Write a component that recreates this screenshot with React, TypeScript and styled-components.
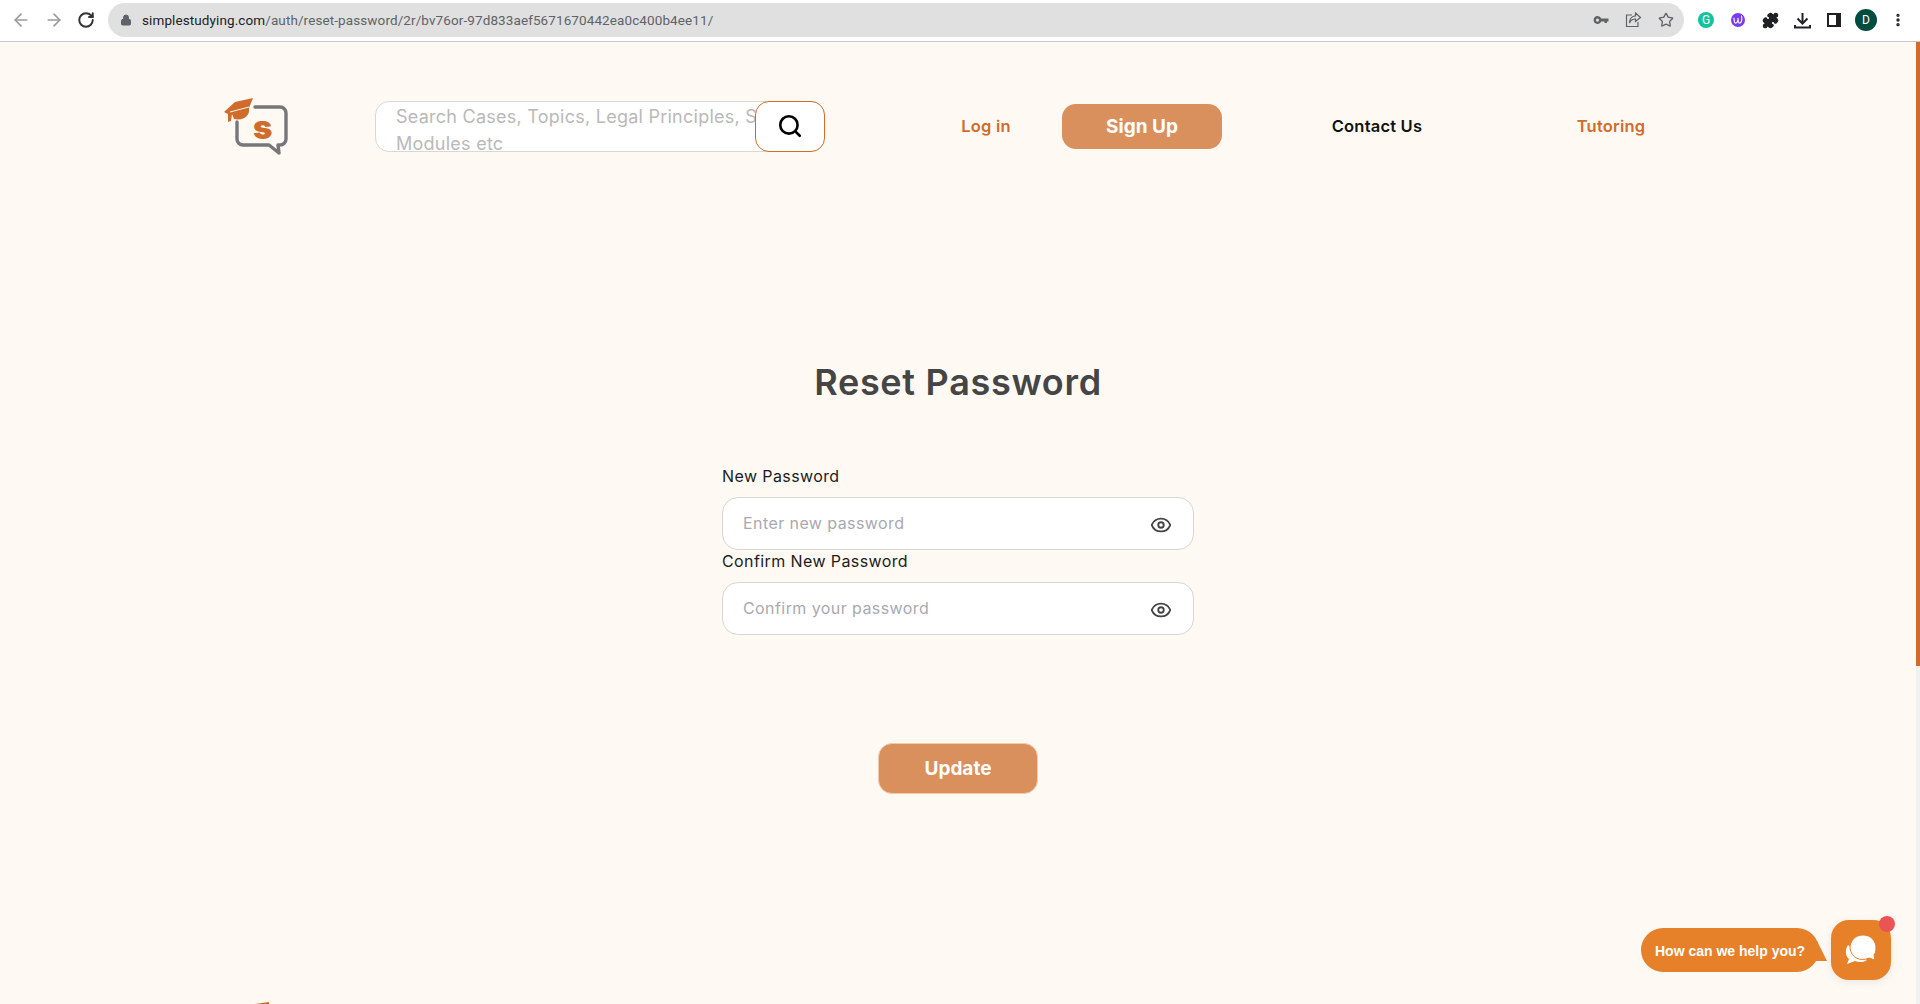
import { createGlobalStyle, styled } from 'styled-components';
import { ArrowLeft, ArrowRight, RotateCw, Lock, Star, Puzzle, Search, Eye, MoreVertical } from 'lucide-react';

const FONT = `'Inter', 'Open Sans', sans-serif`;
const ORANGE = '#d9905c';
const RUST = '#cf6c2c';
const CHAT = '#e68029';

const GlobalStyle = createGlobalStyle`
  html, body {
    margin: 0;
    padding: 0;
    height: 100%;
    overflow: hidden;
    background: #fff9f3;
    font-family: ${FONT};
  }
  * { box-sizing: border-box; }
`;

const Shell = styled.div`
  height: 1004px;
  display: flex;
  flex-direction: column;
  position: relative;
  overflow: hidden;
`;

const BrowserBar = styled.div`
  height: 42px;
  flex: none;
  background: #fff;
  border-bottom: 1px solid #c8c8c8;
  display: flex;
  align-items: center;
  padding: 0 0 1px 11px;
`;

const NavIcons = styled.div`
  display: flex;
  align-items: center;
  gap: 13px;
  width: 97px;
  color: #9a9a9a;
`;

const ReloadIcon = styled(RotateCw)`
  color: #333;
`;

const UrlPill = styled.div`
  width: 1576px;
  height: 34px;
  flex: none;
  border-radius: 17px;
  background: #e0e0e0;
  display: flex;
  align-items: center;
  padding: 0 10px 0 12px;
  color: #5f6368;
`;

const UrlText = styled.div`
  margin-left: 10px;
  flex: 1;
  font-family: 'Roboto', sans-serif;
  font-size: 13.5px;
  letter-spacing: 0.1px;
  color: #5f6368;
  white-space: nowrap;
  b { font-weight: 400; color: #202124; }
`;

const UrlActions = styled.div`
  display: flex;
  gap: 16px;
  align-items: center;
`;

const Extensions = styled.div`
  flex: 1;
  display: flex;
  align-items: center;
  padding-left: 6px;
  color: #202124;
`;

const ExtSlot = styled.span`
  width: 32px;
  flex: none;
  display: flex;
  align-items: center;
  justify-content: center;
`;

const ExtBadge = styled.span<{ $bg: string; $size: number }>`
  width: ${(p) => p.$size}px;
  height: ${(p) => p.$size}px;
  border-radius: 50%;
  background: ${(p) => p.$bg};
  color: #fff;
  display: inline-flex;
  align-items: center;
  justify-content: center;
  font-family: 'Roboto', sans-serif;
  font-size: 12px;
`;

const Viewport = styled.div`
  flex: 1;
  display: flex;
  min-height: 0;
`;

const Page = styled.div`
  flex: 1;
  background: #fff9f3;
  display: flex;
  flex-direction: column;
  overflow: hidden;
`;

const ScrollTrack = styled.div`
  width: 4px;
  flex: none;
  background: #f1f1f1;
`;

const ScrollThumb = styled.div`
  width: 100%;
  height: 624px;
  background: ${RUST};
`;

const Header = styled.header`
  display: flex;
  align-items: center;
  height: 62px;
  margin-top: 53px;
  padding-left: 224px;
`;

const LogoMark = styled.svg`
  width: 66px;
  height: 62px;
  flex: none;
`;

const SearchBox = styled.div`
  position: relative;
  margin-left: 85px;
  width: 450px;
  height: 51px;
  flex: none;
  border: 1px solid #d8d8d6;
  border-radius: 14px;
  background: #fff;
`;

const SearchText = styled.div`
  height: 49px;
  overflow: hidden;
  padding: 1px 0 0 20px;
  font-size: 18px;
  line-height: 27px;
  letter-spacing: 0.25px;
  color: #b9b9b9;
`;

const SearchButton = styled.button`
  position: absolute;
  top: -1px;
  right: -1px;
  width: 70px;
  height: 51px;
  background: #fff;
  border: 1px solid ${RUST};
  border-radius: 14px;
  display: flex;
  align-items: center;
  justify-content: center;
  color: #000;
  padding: 0;
`;

const NavLink = styled.a<{ $color: string; $width: number }>`
  width: ${(p) => p.$width}px;
  flex: none;
  text-align: center;
  font-size: 16.5px;
  font-weight: 600;
  letter-spacing: 0.2px;
  color: ${(p) => p.$color};
`;

const LogIn = styled(NavLink)`
  margin-left: 131px;
`;

const PrimaryButton = styled.button`
  width: 160px;
  border: none;
  background: ${ORANGE};
  color: #fff;
  font-family: ${FONT};
  font-weight: 700;
  font-size: 19px;
  border-radius: 14px;
  flex: none;
`;

const SignUp = styled(PrimaryButton)`
  height: 45px;
  margin-left: 46px;
`;

const Contact = styled(NavLink)`
  margin-left: 96px;
`;

const Tutoring = styled(NavLink)`
  margin-left: 125px;
`;

const Main = styled.main`
  display: flex;
  flex-direction: column;
  align-items: center;
  padding-top: 204px;
  flex: 1;
`;

const Title = styled.h1`
  margin: 0;
  height: 42px;
  font-size: 36px;
  line-height: 42px;
  font-weight: 600;
  color: #454545;
  letter-spacing: 0.7px;
`;

const Form = styled.form`
  width: 472px;
  margin-top: 64px;
  display: flex;
  flex-direction: column;
`;

const FieldLabel = styled.label`
  height: 18px;
  font-size: 16px;
  line-height: 18px;
  letter-spacing: 0.4px;
  color: #1c1c1c;
  margin-bottom: 12px;
`;

const SecondLabel = styled(FieldLabel)`
  margin-top: 2px;
`;

const InputRow = styled.div`
  height: 53px;
  border: 1px solid #d9d6d3;
  border-radius: 16px;
  background: #fff;
  display: flex;
  align-items: center;
  justify-content: space-between;
  padding: 0 21px 0 20px;
  color: #444;
`;

const Placeholder = styled.span`
  font-size: 16px;
  letter-spacing: 0.42px;
  color: #a9a9b0;
  margin-bottom: 2px;
`;

const EyeIcon = styled(Eye)`
  margin-top: 2px;
`;

const UpdateButton = styled(PrimaryButton)`
  height: 51px;
  margin-top: 108px;
  padding-bottom: 2px;
  border: 1px solid #f5c9a6;
`;

const FooterPeek = styled.div`
  height: 2px;
  flex: none;
  margin-left: 255px;
  width: 14px;
  background: ${RUST};
  clip-path: polygon(0 100%, 100% 0, 100% 100%);
`;

const ChatWidget = styled.div`
  position: absolute;
  left: 1641px;
  top: 920px;
  display: flex;
  align-items: center;
`;

const ChatBubble = styled.div`
  position: relative;
  width: 178px;
  height: 44px;
  background: ${CHAT};
  border-radius: 22px;
  color: #fff;
  font-family: 'Liberation Sans', sans-serif;
  font-weight: 700;
  font-size: 14px;
  display: flex;
  align-items: center;
  padding: 2px 0 0 14px;
  &::after {
    content: '';
    position: absolute;
    right: -8px;
    bottom: 11px;
    width: 22px;
    height: 20px;
    background: ${CHAT};
    clip-path: polygon(55% 0, 100% 100%, 0 100%);
  }
`;

const ChatButton = styled.div`
  position: relative;
  width: 60px;
  height: 60px;
  margin-left: 12px;
  border-radius: 18px;
  background: ${CHAT};
  display: flex;
  align-items: center;
  justify-content: center;
  box-shadow: 0 2px 8px rgba(0, 0, 0, 0.08);
  &::after {
    content: '';
    position: absolute;
    top: -4px;
    right: -4px;
    width: 16px;
    height: 16px;
    border-radius: 50%;
    background: #ea5455;
  }
`;

const Logo = () => (
  <LogoMark viewBox="0 0 66 62">
    <path d="M31 12 H56 a6 6 0 0 1 6 6 V44 a6 6 0 0 1 -6 6 H54 L55 58 L45 50 H19 a6 6 0 0 1 -6 -6 V27" fill="none" stroke="#77777a" strokeWidth="3.4" strokeLinecap="round" strokeLinejoin="round" />
    <path d="M0 17 L11 7 L29 3 L25 13 C26 21 20 26 10 24 L8 19 L7 26 L4 27 L4 19 Z" fill={RUST} />
    <path d="M6 17 L25 12" stroke="#fff9f3" strokeWidth="1" />
    <text x="29" y="44" fontFamily="Inter, sans-serif" fontWeight="900" fontSize="33" fill={RUST}>s</text>
  </LogoMark>
);

const ChatIcon = () => (
  <svg width="32" height="30" viewBox="0 0 32 30">
    <path d="M3 10 C0 14 0 21 4 24 L2 29 L10 26 C14 28 20 27 22 25 Z" fill="#fff" />
    <path d="M18 0 C26 0 31 6 31 13 C31 16 30 19 29 20 L30 25 L24 23 C16 27 6 23 5 13 C5 6 10 0 18 0 Z" fill="#fff" stroke={CHAT} strokeWidth="1" />
  </svg>
);

const KeyIcon = () => (
  <svg width="16" height="16" viewBox="0 0 16 16" fill="#5f6368">
    <path d="M4.5 4 A4 4 0 0 1 8.3 6.6 H15.5 V9.6 H14 V11 H11.5 V9.6 H8.3 A4 4 0 1 1 4.5 4 Z M4.5 6.5 A1.6 1.6 0 1 0 4.5 9.7 A1.6 1.6 0 1 0 4.5 6.5 Z" fillRule="evenodd" />
  </svg>
);

const ShareIcon = () => (
  <svg width="17" height="16" viewBox="0 0 17 16" fill="none" stroke="#5f6368" strokeWidth="1.2">
    <path d="M7 3 H1.5 V14.5 H13 V10" />
    <path d="M10.5 1 L15.5 5.5 L10.5 9.5 V7 C7.5 7 5.5 8.5 4.5 11 C4.5 7 7 4 10.5 3.8 Z" />
  </svg>
);

const DownloadIcon = () => (
  <svg width="17" height="17" viewBox="0 0 17 17" fill="none" stroke="#202124" strokeWidth="2">
    <path d="M8.5 1 V10" />
    <path d="M3.5 6.5 L8.5 11.5 L13.5 6.5" />
    <path d="M1 13 V15.5 H16 V13" />
  </svg>
);

const SidePanelIcon = () => (
  <svg width="14" height="14" viewBox="0 0 14 14">
    <path d="M0 0 H14 V14 H0 Z M2 2 V12 H9 V2 Z" fill="#202124" fillRule="evenodd" />
  </svg>
);

const WritingIcon = () => (
  <svg width="10" height="10" viewBox="0 0 10 10" fill="none" stroke="#fff" strokeWidth="1.1" strokeLinecap="round">
    <path d="M1 3 C1 6 1.5 8.5 3 8 C4.5 7.5 5 5 5 3 C5 6 5.5 8.5 7 8 C8.5 7.5 9 4 8.5 1" />
  </svg>
);

export default function App() {
  return (
    <Shell>
      <GlobalStyle />
      <BrowserBar>
        <NavIcons>
          <ArrowLeft size={20} />
          <ArrowRight size={20} />
          <ReloadIcon size={18} strokeWidth={2.6} />
        </NavIcons>
        <UrlPill>
          <Lock size={12} fill="#5f6368" />
          <UrlText>
            <b>simplestudying.com</b>/auth/reset-password/2r/bv76or-97d833aef5671670442ea0c400b4ee11/
          </UrlText>
          <UrlActions>
            <KeyIcon />
            <ShareIcon />
            <Star size={16} />
          </UrlActions>
        </UrlPill>
        <Extensions>
          <ExtSlot><ExtBadge $bg="#15c39a" $size={16}>G</ExtBadge></ExtSlot>
          <ExtSlot><ExtBadge $bg="#7c3aed" $size={14}><WritingIcon /></ExtBadge></ExtSlot>
          <ExtSlot><Puzzle size={17} fill="#202124" /></ExtSlot>
          <ExtSlot><DownloadIcon /></ExtSlot>
          <ExtSlot><SidePanelIcon /></ExtSlot>
          <ExtSlot><ExtBadge $bg="#004d40" $size={22}>D</ExtBadge></ExtSlot>
          <ExtSlot><MoreVertical size={16} strokeWidth={3} /></ExtSlot>
        </Extensions>
      </BrowserBar>
      <Viewport>
        <Page>
          <Header>
            <Logo />
            <SearchBox>
              <SearchText>Search Cases, Topics, Legal Principles, Study Modules etc</SearchText>
              <SearchButton>
                <Search size={26} strokeWidth={2.4} />
              </SearchButton>
            </SearchBox>
            <LogIn $color={RUST} $width={60}>Log in</LogIn>
            <SignUp>Sign Up</SignUp>
            <Contact $color="#111" $width={118}>Contact Us</Contact>
            <Tutoring $color={RUST} $width={100}>Tutoring</Tutoring>
          </Header>
          <Main>
            <Title>Reset Password</Title>
            <Form>
              <FieldLabel>New Password</FieldLabel>
              <InputRow>
                <Placeholder>Enter new password</Placeholder>
                <EyeIcon size={22} />
              </InputRow>
              <SecondLabel>Confirm New Password</SecondLabel>
              <InputRow>
                <Placeholder>Confirm your password</Placeholder>
                <EyeIcon size={22} />
              </InputRow>
            </Form>
            <UpdateButton>Update</UpdateButton>
          </Main>
          <FooterPeek />
        </Page>
        <ScrollTrack>
          <ScrollThumb />
        </ScrollTrack>
      </Viewport>
      <ChatWidget>
        <ChatBubble>How can we help you?</ChatBubble>
        <ChatButton>
          <ChatIcon />
        </ChatButton>
      </ChatWidget>
    </Shell>
  );
}
